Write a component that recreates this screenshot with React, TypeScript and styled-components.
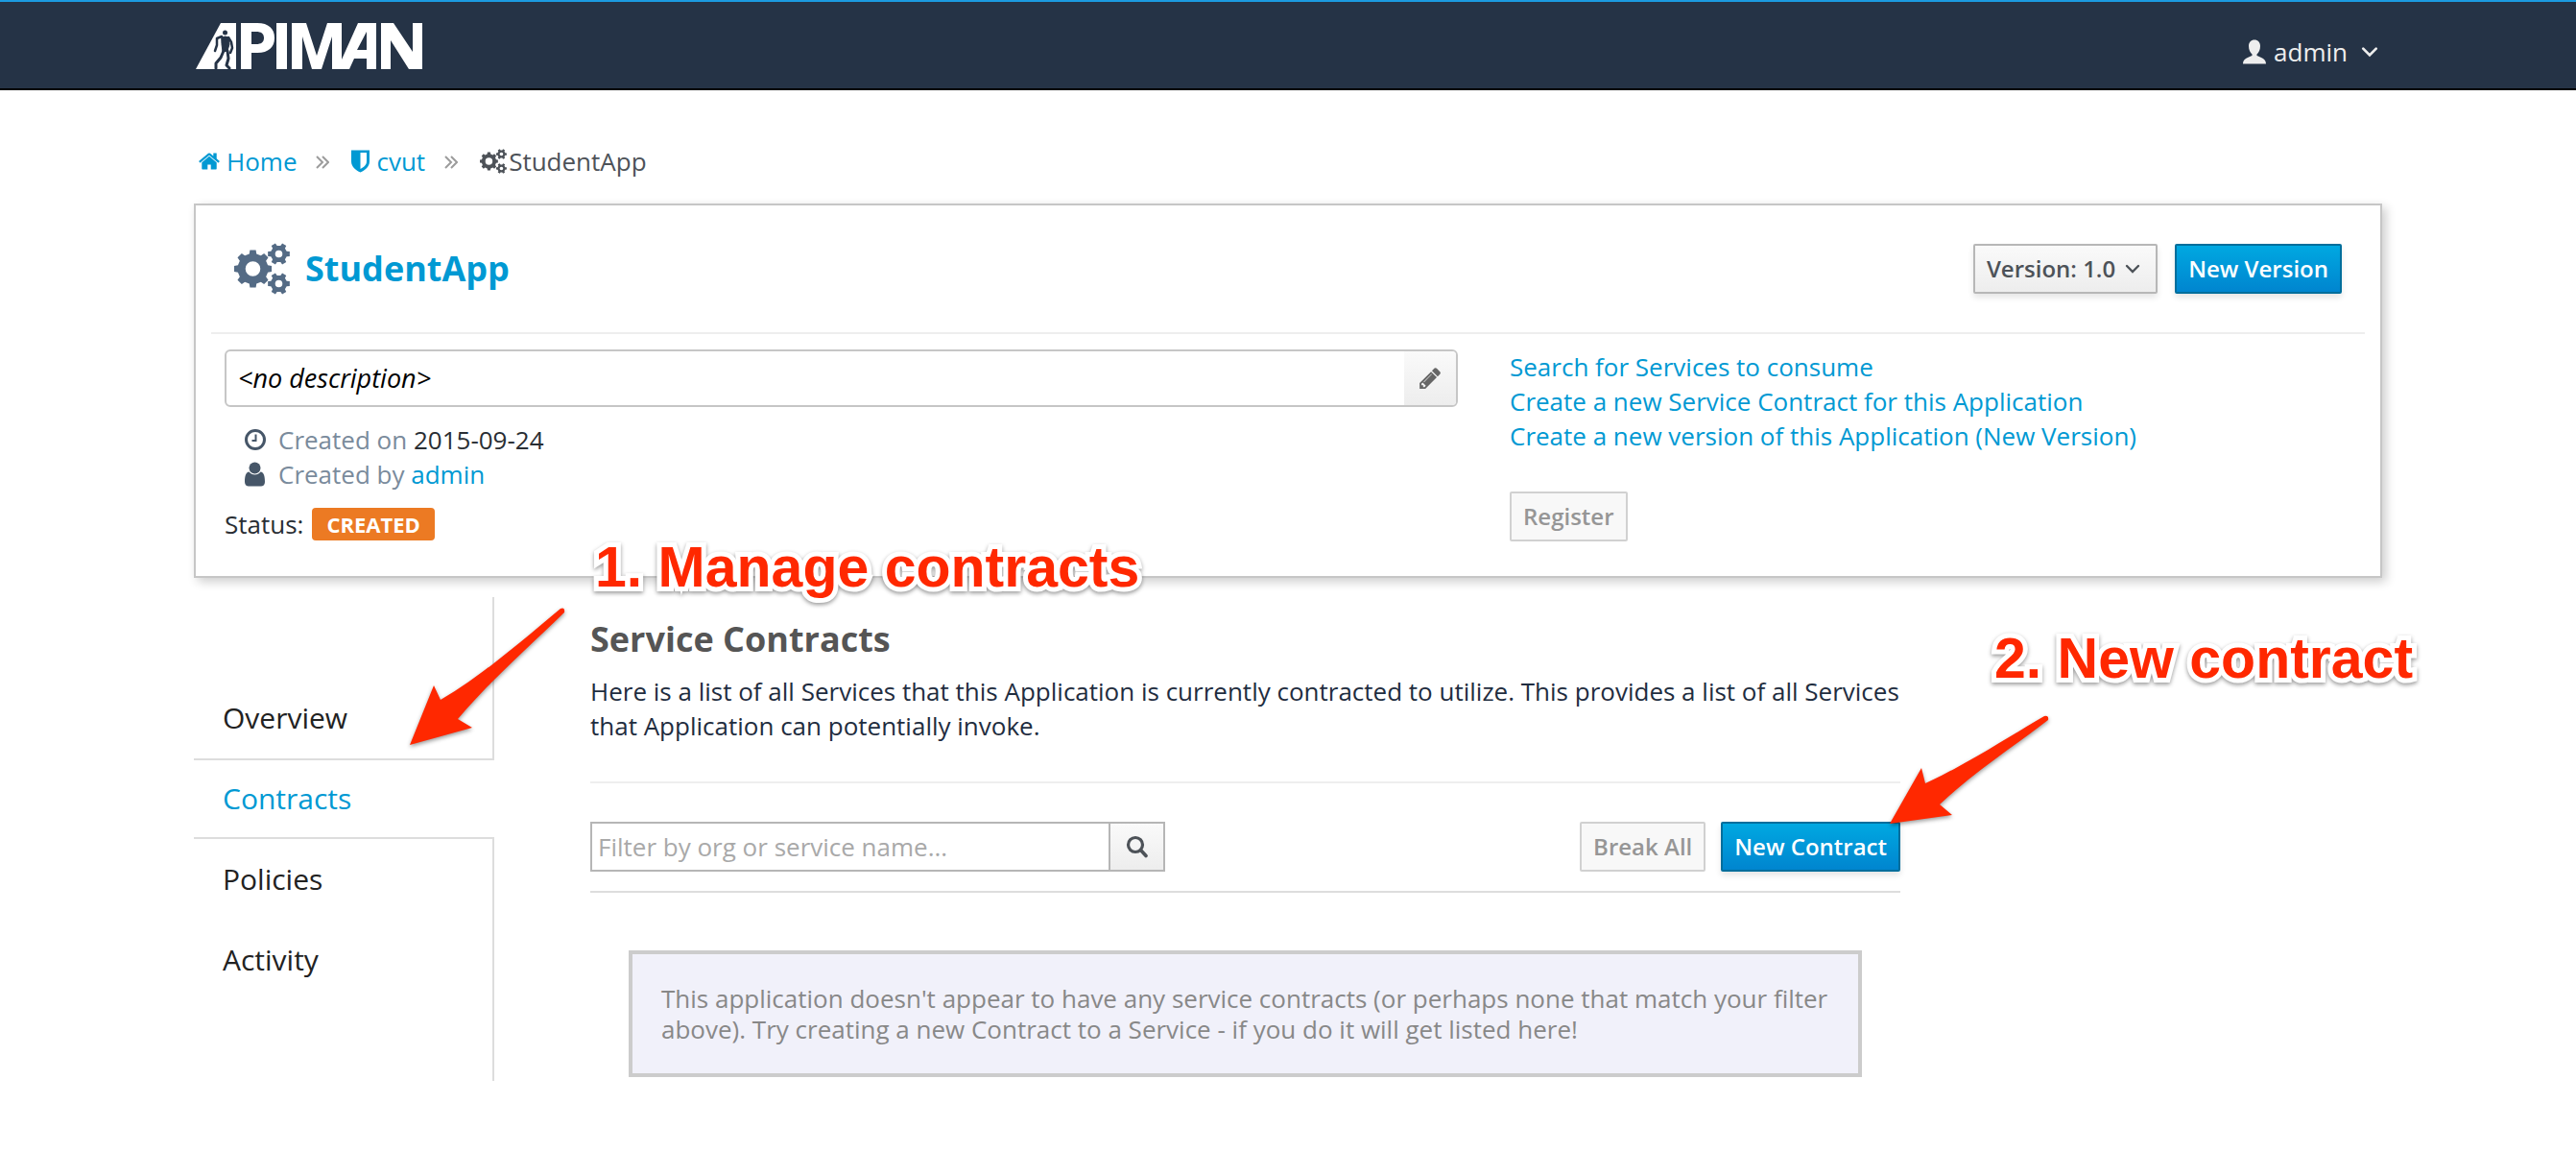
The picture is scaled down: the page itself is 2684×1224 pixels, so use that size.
import React from "react";
import styled, { createGlobalStyle } from "styled-components";

const GlobalStyle = createGlobalStyle`
  *, *::before, *::after { box-sizing: border-box; }
  body {
    margin: 0;
    background: #fff;
    color: #333;
    font: 26px/36px "Open Sans", "Noto Sans", sans-serif;
  }
`;

const BLUE = "#0099d3";

const Wrap = styled.div`
  width: 100%;
  max-width: 2360px;
  margin: 0 auto;
  padding: 0 40px;
`;

const TopBar = styled.header`
  border-top: 2px solid #1b9be0;
  border-bottom: 2px solid #000;
  background: #253346;
`;

const TopInner = styled(Wrap)`
  display: flex;
  align-items: center;
  justify-content: space-between;
  height: 90px;
`;

const LogoLink = styled.a`
  display: block;
  line-height: 0;
  margin: 2px 0 0 2px;
`;

const UserMenu = styled.button`
  display: flex;
  align-items: center;
  gap: 8px;
  margin-top: 14px;
  padding: 0 4px;
  border: 0;
  background: none;
  color: #eee;
  font: inherit;
`;

const MenuChevron = styled.span`
  display: flex;
  margin-left: 6px;
`;

const Crumbs = styled.nav`
  display: flex;
  align-items: center;
  margin: 56px 0 26px;
  padding-left: 4px;
  color: #4d5258;
`;

const CrumbLink = styled.a`
  display: flex;
  align-items: center;
  gap: 6px;
  color: ${BLUE};
  text-decoration: none;
`;

const CrumbSep = styled.span`
  display: flex;
  margin: 2px 23px 0 20px;
  color: #9c9c9c;
`;

const CrumbCurrent = styled.span`
  display: flex;
  align-items: center;
  gap: 2px;
`;

const Card = styled.section`
  padding: 0 16px;
  border: 2px solid #c6c6c6;
  box-shadow: 4px 4px 10px rgba(0, 0, 0, 0.2);
`;

const CardHead = styled.div`
  display: flex;
  align-items: center;
  height: 134px;
  padding: 0 24px;
  border-bottom: 2px solid #eee;
`;

const AppTitle = styled.h1`
  display: flex;
  align-items: center;
  gap: 16px;
  margin: 0 auto 0 0;
  color: ${BLUE};
  font-size: 36px;
  line-height: 48px;
`;

const TitleIcon = styled.span`
  display: flex;
  color: #546b85;
`;

const Actions = styled.div`
  display: flex;
  gap: 18px;
`;

const Button = styled.button<{ $primary?: boolean }>`
  display: flex;
  align-items: center;
  height: 52px;
  padding: 0 12px;
  border: 2px solid ${(p) => (p.$primary ? "#006e9c" : "#b7b7b7")};
  border-radius: 2px;
  background: ${(p) =>
    p.$primary
      ? "linear-gradient(#00a8e1, #0085cf)"
      : "linear-gradient(#fafafa, #ededed)"};
  box-shadow: 0 4px 6px rgba(3, 3, 3, 0.1);
  color: ${(p) => (p.$primary ? "#fff" : "#4d5258")};
  font: 600 24px/32px "Open Sans", "Noto Sans", sans-serif;
  white-space: nowrap;

  &:disabled {
    border-color: #d1d1d1;
    background: #f8f8f8;
    box-shadow: none;
    color: #969696;
  }
`;

const Caret = styled.span`
  display: flex;
  margin: 0 4px 0 10px;
`;

const CardBody = styled.div`
  display: grid;
  grid-template-columns: minmax(0, 1285fr) minmax(0, 877fr);
  gap: 54px;
  padding: 16px 14px 36px;
`;

const Description = styled.div`
  display: flex;
  height: 60px;
  border: 2px solid #c6c6c6;
  border-radius: 6px;
  overflow: hidden;
`;

const DescriptionText = styled.span`
  flex: 1;
  padding: 10px 12px;
  color: #000;
  font-size: 27px;
  font-style: italic;
`;

const EditButton = styled.button`
  display: flex;
  align-items: center;
  justify-content: center;
  width: 54px;
  border: 0;
  background: linear-gradient(#fafafa, #ededed);
  color: #666;
`;

const Meta = styled.div`
  display: flex;
  align-items: center;
  gap: 12px;
  padding-left: 20px;
  color: #7a8b9c;
`;

const MetaList = styled.div`
  margin: 16px 0;
`;

const MetaIcon = styled.span`
  display: flex;
  color: #465668;
`;

const MetaValue = styled.span`
  color: #292e34;
`;

const TextLink = styled.a`
  color: ${BLUE};
  text-decoration: none;
`;

const Status = styled.div`
  display: flex;
  align-items: center;
  gap: 9px;
  color: #292e34;
`;

const Badge = styled.span`
  padding: 0 15px;
  border-radius: 4px;
  background: #ec7a23;
  color: #fff;
  font-size: 22px;
  font-weight: 700;
  line-height: 34px;
`;

const LinkList = styled.div`
  display: flex;
  flex-direction: column;
  align-items: flex-start;
`;

const RegisterRow = styled.div`
  margin-top: 40px;
`;

const Columns = styled.div`
  display: grid;
  grid-template-columns: 313px minmax(0, 1365px);
  gap: 100px;
  align-items: start;
  margin-top: 20px;
`;

const SideNav = styled.nav`
  display: flex;
  flex-direction: column;
`;

const NavSpace = styled.div`
  height: 84px;
  border-right: 2px solid #ddd;
`;

const NavLink = styled.a<{ $active?: boolean }>`
  height: 84px;
  padding: ${(p) => (p.$active ? 20 : 22)}px 30px;
  border: solid #ddd;
  border-width: ${(p) => (p.$active ? "2px 0" : "0 2px 0 0")};
  color: ${(p) => (p.$active ? BLUE : "#222")};
  font-size: 30px;
  line-height: 40px;
  text-decoration: none;
`;

const Main = styled.main`
  padding-top: 22px;
`;

const Heading = styled.h2`
  margin: 0 0 14px;
  color: #555;
  font-size: 36px;
  line-height: 44px;
`;

const Intro = styled.p`
  margin: 0;
  padding-bottom: 40px;
  border-bottom: 2px solid #eee;
  color: #1f2d40;
`;

const Toolbar = styled.div`
  display: flex;
  gap: 16px;
  padding: 40px 0 20px;
  border-bottom: 2px solid #ddd;
`;

const Search = styled.form`
  display: flex;
  width: 599px;
  height: 52px;
  margin-right: auto;
`;

const SearchInput = styled.input`
  flex: 1;
  min-width: 0;
  padding: 0 6px;
  border: 2px solid #b6b6b6;
  border-radius: 0;
  background: #fff;
  color: #333;
  font: inherit;

  &::placeholder {
    color: #a9a9a9;
    opacity: 1;
  }
`;

const SearchButton = styled.button`
  display: flex;
  align-items: center;
  justify-content: center;
  width: 57px;
  border: 2px solid #b6b6b6;
  border-left: 0;
  background: linear-gradient(#fafafa, #ededed);
`;

const Notice = styled.p`
  margin: 60px 40px 100px;
  padding: 30px;
  border: 4px solid #ccc;
  background: #f1f1fa;
  color: #888;
  line-height: 32px;
`;

const Page = styled.div`
  position: relative;
`;

const Note = styled.div<{ $x: number; $y: number }>`
  position: absolute;
  left: ${(p) => p.$x}px;
  top: ${(p) => p.$y}px;
  color: #ff2800;
  font: 700 59px/68px "Liberation Sans", Arial, sans-serif;
  white-space: nowrap;
  -webkit-text-stroke: 10px #fff;
  paint-order: stroke fill;
  filter: drop-shadow(0 2px 2px rgba(0, 0, 0, 0.4));
`;

const Pointer = styled.svg<{ $x: number; $y: number }>`
  position: absolute;
  left: ${(p) => p.$x}px;
  top: ${(p) => p.$y}px;
  overflow: visible;
  pointer-events: none;
  filter: drop-shadow(0 2px 2px rgba(0, 0, 0, 0.4));
`;

const Logo = () => (
  <svg width="236" height="48" viewBox="0 0 236 48" role="img" aria-label="APIMAN">
    <g fill="#fff" fillRule="evenodd">
      <path d="M0 48 26 0H42V48Z" />
      <path d="M47 0H64C76 0 82 6 82 15.500C82 25 76 31 64 31H58V48H47ZM58 9V22H63C68 22 71 20 71 15.500C71 11 68 9 63 9Z" />
      <path d="M84 0H95V48H84Z" />
      <path d="M100 0H115L126 34 137 0H152V38L169 0H188V48H178V37H165L160 48H142V14L131 48H121L111 14V48H100ZM178 9 168 28H178Z" />
      <path d="M193 0H206L226 30V0H236V48H222L203 18V48H193Z" />
    </g>
    <g stroke="#253346" fill="none" strokeLinecap="round" strokeLinejoin="round">
      <circle cx="30.500" cy="10" r="2.500" fill="#253346" stroke="none" />
      <path d="M27 15Q31 13 34 15L35 22 33 29 28 30 27 22Z" fill="#253346" strokeWidth="1" />
      <path d="M27 14 22 16 22 23 20 29M34 15 37 20 38 26 36 31" strokeWidth="2.500" />
      <path d="M29 29 26 36 21 42 21 47M33 29 34 37 32 44 35 47" strokeWidth="3" />
    </g>
  </svg>
);

const gearPath = (cx: number, cy: number, outer: number, root: number, hole: number, teeth: number) => {
  const step = (Math.PI * 2) / teeth;
  const at = (r: number, a: number) =>
    `${(cx + r * Math.cos(a)).toFixed(2)} ${(cy + r * Math.sin(a)).toFixed(2)}`;
  const points: string[] = [];
  for (let i = 0; i < teeth; i += 1) {
    const a = i * step;
    points.push(at(root, a - step * 0.3), at(outer, a - step * 0.2), at(outer, a + step * 0.2), at(root, a + step * 0.3));
  }
  return `M${points.join("L")}ZM${cx - hole} ${cy}a${hole} ${hole} 0 1 0 ${hole * 2} 0a${hole} ${hole} 0 1 0 ${-hole * 2} 0Z`;
};

const Gears = ({ width, height }: { width: number; height: number }) => (
  <svg width={width} height={height} viewBox="0 0 58 54" fill="currentColor" fillRule="evenodd">
    <path d={gearPath(19.5, 27, 19.8, 16, 7.8, 8)} />
    <path d={gearPath(46.5, 11.5, 11.6, 8.6, 3.8, 6)} />
    <path d={gearPath(46.5, 42.5, 11.6, 8.6, 3.8, 6)} />
  </svg>
);

const House = () => (
  <svg width="24" height="24" viewBox="0 0 1664 1792" fill="currentColor">
    <path d="M1408 992v480q0 26-19 45t-45 19h-384v-384h-256v384h-384q-26 0-45-19t-19-45v-480q0-1 .5-3t.5-3l575-474 575 474q1 2 1 6zM1631 923l-62 74q-8 9-21 11h-3q-13 0-21-7l-692-577-692 577q-12 8-24 7-13-2-21-11l-62-74q-8-10-7-23.5t11-21.5l719-599q32-26 76-26t76 26l244 204v-195q0-14 9-23t23-9h192q14 0 23 9t9 23v408l219 182q10 8 11 21.5t-7 23.5z" />
  </svg>
);

const Pencil = () => (
  <svg width="22" height="22" viewBox="0 0 1515 1536" fill="currentColor" fillRule="evenodd">
    <path d="M363 1408l91-91-235-235-91 91v107h128v128h107zM886 480q0-22-22-22-10 0-17 7l-542 542q-7 7-7 17 0 22 22 22 10 0 17-7l542-542q7-7 7-17zM832 288l416 416-832 832h-416v-416zM1515 384q0 53-37 90l-166 166-416-416 166-165q36-38 90-38 53 0 91 38l235 234q37 39 37 91z" />
  </svg>
);

const Chevron = ({ size = 16 }: { size?: number }) => (
  <svg width={size} height={size} viewBox="0 0 16 16" fill="none" stroke="currentColor" strokeWidth="2.400" strokeLinecap="round">
    <path d="M2 5 8 11 14 5" />
  </svg>
);

const Silhouette = () => (
  <svg width="24" height="26" viewBox="0 0 24 26" fill="currentColor">
    <path d="M12 0.500C15.500 0.500 18 3 18 7C18 11 16.500 13.500 14.500 15.500V17C18 18.500 24 20 24 25.500H0C0 20 6 18.500 9.500 17V15.500C7.500 13.500 6 11 6 7C6 3 8.500 0.500 12 0.500Z" />
  </svg>
);

const DoubleAngle = () => (
  <svg width="14" height="14" viewBox="0 0 14 14" fill="none" stroke="currentColor" strokeWidth="2">
    <path d="M1 1 7 7 1 13M7 1 13 7 7 13" />
  </svg>
);

const Shield = () => (
  <svg width="20" height="24" viewBox="0 0 20 24">
    <path d="M0 0.500H19V12C19 18 14 21.500 9.500 23.500C5 21.500 0 18 0 12ZM9.500 3V20C13 18 16 16 16 12V3Z" fill="currentColor" fillRule="evenodd" />
  </svg>
);

const Clock = () => (
  <svg width="24" height="24" viewBox="0 0 24 24" fill="none" stroke="currentColor">
    <circle cx="12" cy="12" r="9.500" strokeWidth="3" />
    <path d="M12.500 6.500V13H8.500" strokeWidth="2" />
  </svg>
);

const Person = () => (
  <svg width="24" height="26" viewBox="0 0 24 26" fill="currentColor">
    <circle cx="11.500" cy="6.500" r="6" />
    <path d="M5.500 10.500C7 12.500 9 13.500 11.500 13.500S16 12.500 17.500 10.500C21 11 22 15 22 21C22 24 20 25.500 18 25.500H5C3 25.500 1 24 1 21C1 15 2 11 5.500 10.500Z" />
  </svg>
);

const Magnifier = () => (
  <svg width="24" height="24" viewBox="0 0 24 24" fill="none" stroke="#4d5258" strokeLinecap="round">
    <circle cx="10" cy="10" r="7.500" strokeWidth="3.200" />
    <path d="M15.500 15.500 21 21.500" strokeWidth="3.600" />
  </svg>
);

export default function App() {
  return (
    <Page>
      <GlobalStyle />
      <TopBar>
        <TopInner>
          <LogoLink href="#"><Logo /></LogoLink>
          <UserMenu type="button">
            <Silhouette />
            admin
            <MenuChevron><Chevron size={18} /></MenuChevron>
          </UserMenu>
        </TopInner>
      </TopBar>

      <Wrap>
        <Crumbs aria-label="Breadcrumb">
          <CrumbLink href="#"><House />Home</CrumbLink>
          <CrumbSep><DoubleAngle /></CrumbSep>
          <CrumbLink href="#"><Shield />cvut</CrumbLink>
          <CrumbSep><DoubleAngle /></CrumbSep>
          <CrumbCurrent><Gears width={28} height={26} />StudentApp</CrumbCurrent>
        </Crumbs>

        <Card>
          <CardHead>
            <AppTitle><TitleIcon><Gears width={58} height={54} /></TitleIcon>StudentApp</AppTitle>
            <Actions>
              <Button type="button">Version: 1.0<Caret><Chevron /></Caret></Button>
              <Button type="button" $primary>New Version</Button>
            </Actions>
          </CardHead>
          <CardBody>
            <div>
              <Description>
                <DescriptionText>&lt;no description&gt;</DescriptionText>
                <EditButton type="button" aria-label="Edit description"><Pencil /></EditButton>
              </Description>
              <MetaList>
                <Meta>
                  <MetaIcon><Clock /></MetaIcon>
                  <span>Created on <MetaValue>2015-09-24</MetaValue></span>
                </Meta>
                <Meta>
                  <MetaIcon><Person /></MetaIcon>
                  <span>Created by <TextLink href="#">admin</TextLink></span>
                </Meta>
              </MetaList>
              <Status>Status: <Badge>CREATED</Badge></Status>
            </div>
            <div>
              <LinkList>
                <TextLink href="#">Search for Services to consume</TextLink>
                <TextLink href="#">Create a new Service Contract for this Application</TextLink>
                <TextLink href="#">Create a new version of this Application (New Version)</TextLink>
              </LinkList>
              <RegisterRow><Button type="button" disabled>Register</Button></RegisterRow>
            </div>
          </CardBody>
        </Card>

        <Columns>
          <SideNav aria-label="Application">
            <NavSpace />
            <NavLink href="#">Overview</NavLink>
            <NavLink href="#" $active>Contracts</NavLink>
            <NavLink href="#">Policies</NavLink>
            <NavLink href="#">Activity</NavLink>
            <NavSpace />
          </SideNav>
          <Main>
            <Heading>Service Contracts</Heading>
            <Intro>
              Here is a list of all Services that this Application is currently contracted to utilize. This
              provides a list of all Services that Application can potentially invoke.
            </Intro>
            <Toolbar>
              <Search>
                <SearchInput type="text" aria-label="Filter by org or service name" placeholder="Filter by org or service name..." />
                <SearchButton type="button" aria-label="Search"><Magnifier /></SearchButton>
              </Search>
              <Button type="button" disabled>Break All</Button>
              <Button type="button" $primary>New Contract</Button>
            </Toolbar>
            <Notice>
              This application doesn't appear to have any service contracts (or perhaps none that match your
              filter above). Try creating a new Contract to a Service - if you do it will get listed here!
            </Notice>
          </Main>
        </Columns>
      </Wrap>

      <Note $x={620} $y={557}>1. Manage contracts</Note>
      <Note $x={2078} $y={652}>2. New contract</Note>
      <Pointer $x={427} $y={633} width="162" height="144" viewBox="0 0 162 144">
        <path fill="#ff2800" d="M0 143 25 81 32 96C75 71 115 36 157 1Q162 -1 161 5C125 40 85 75 50 116L65 125Z" />
      </Pointer>
      <Pointer $x={1969} $y={745} width="166" height="113" viewBox="0 0 166 113">
        <path fill="#ff2800" d="M0 113 33 55 37 71C75 54 120 25 161 1Q166 0 165 5C130 32 88 59 52 93L65 104Z" />
      </Pointer>
    </Page>
  );
}
